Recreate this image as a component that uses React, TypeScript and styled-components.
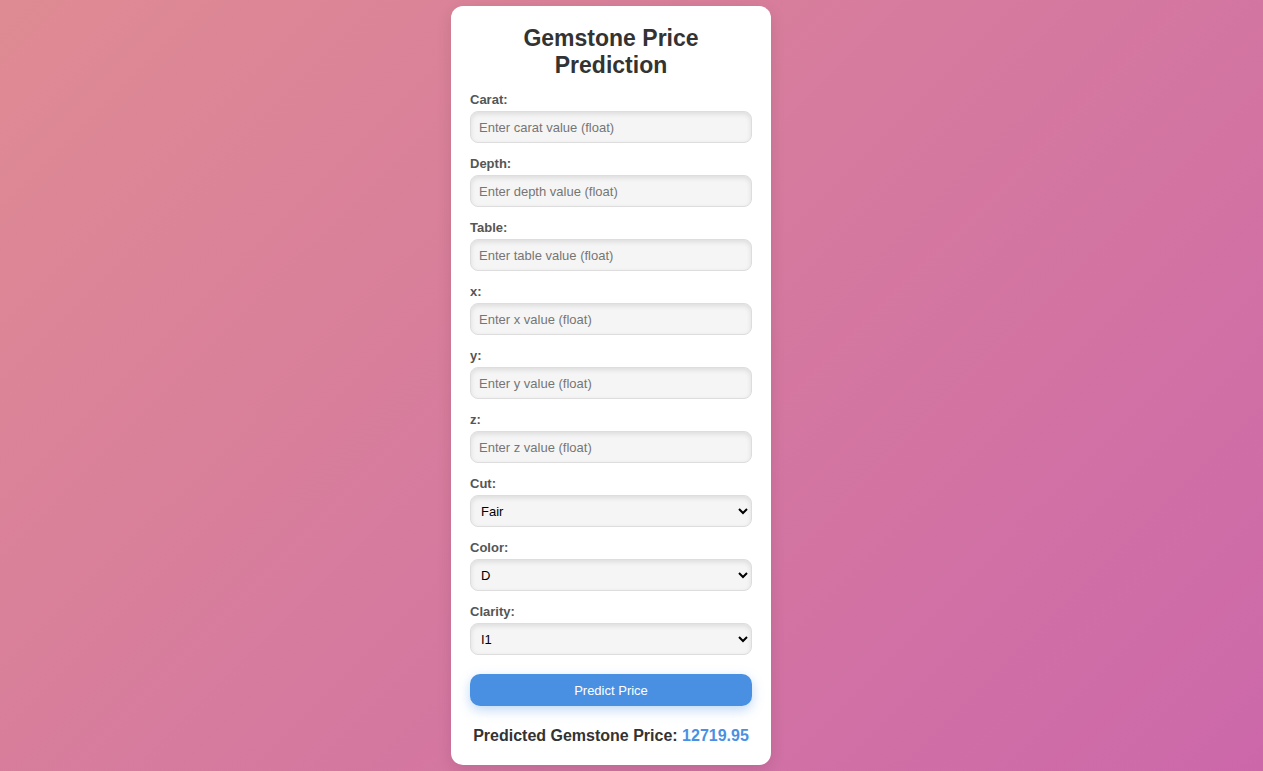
import React from "react";
import styled, { createGlobalStyle } from "styled-components";

const Global = createGlobalStyle`
  html, body { margin: 0; padding: 0; height: 100%; }
  body {
    font-family: "Liberation Sans", Arial, sans-serif;
    background: linear-gradient(135deg, #df8b93 0%, #cc68aa 100%);
    background-attachment: fixed;
    min-height: 771px;
  }
`;

const Page = styled.div`
  display: flex;
  justify-content: center;
  padding: 6px 41px 0 0;
  box-sizing: border-box;
  min-height: 771px;
`;

const Card = styled.form`
  width: 320px;
  height: 759px;
  box-sizing: border-box;
  background: #fff;
  border-radius: 12px;
  padding: 19px 19px 20px;
  box-shadow: 0 4px 15px rgba(0, 0, 0, 0.1);
  display: flex;
  flex-direction: column;
`;

const Title = styled.h1`
  margin: 0 0 13px;
  font-size: 23px;
  line-height: 27px;
  font-weight: bold;
  color: #333;
  text-align: center;
`;

const Field = styled.div`
  display: flex;
  flex-direction: column;
  margin-bottom: 13px;
`;

const Label = styled.label`
  font-size: 13px;
  font-weight: bold;
  color: #555;
  line-height: 15px;
  margin-bottom: 4px;
`;

const fieldStyle = `
  width: 100%;
  height: 32px;
  box-sizing: border-box;
  border: 1px solid #ddd;
  border-radius: 8px;
  background: #f5f5f5;
  box-shadow: inset 0 2px 5px rgba(0, 0, 0, 0.1);
  font-family: "Liberation Sans", Arial, sans-serif;
  font-size: 13px;
  color: #000;
  outline: none;
`;

const Input = styled.input`
  ${fieldStyle}
  padding: 0 8px;
  &::placeholder { color: #757575; }
`;

const Select = styled.select`
  ${fieldStyle}
  padding: 0 6px;
`;

const Button = styled.button`
  margin-top: 6px;
  height: 34px;
  border: none;
  border-radius: 10px;
  background: #4a90e2;
  color: #fff;
  font-family: "Liberation Sans", Arial, sans-serif;
  font-size: 13px;
  box-shadow: 0 4px 12px rgba(74, 144, 226, 0.35);
  cursor: pointer;
`;

const Result = styled.p`
  margin: 21px 0 0;
  text-align: center;
  font-size: 16px;
  font-weight: bold;
  color: #333;
`;

const Value = styled.span`
  color: #4a90e2;
`;

const numeric = [
  { id: "carat", label: "Carat:", ph: "Enter carat value (float)" },
  { id: "depth", label: "Depth:", ph: "Enter depth value (float)" },
  { id: "table", label: "Table:", ph: "Enter table value (float)" },
  { id: "x", label: "x:", ph: "Enter x value (float)" },
  { id: "y", label: "y:", ph: "Enter y value (float)" },
  { id: "z", label: "z:", ph: "Enter z value (float)" },
];

const selects = [
  { id: "cut", label: "Cut:", options: ["Fair", "Good", "Very Good", "Premium", "Ideal"] },
  { id: "color", label: "Color:", options: ["D", "E", "F", "G", "H", "I", "J"] },
  { id: "clarity", label: "Clarity:", options: ["I1", "SI2", "SI1", "VS2", "VS1", "VVS2", "VVS1", "IF"] },
];

export default function App() {
  return (
    <>
      <Global />
      <Page>
        <Card onSubmit={(e) => e.preventDefault()}>
          <Title>Gemstone Price Prediction</Title>
          {numeric.map((f) => (
            <Field key={f.id}>
              <Label htmlFor={f.id}>{f.label}</Label>
              <Input id={f.id} placeholder={f.ph} />
            </Field>
          ))}
          {selects.map((s) => (
            <Field key={s.id}>
              <Label htmlFor={s.id}>{s.label}</Label>
              <Select id={s.id} defaultValue={s.options[0]}>
                {s.options.map((o) => (
                  <option key={o}>{o}</option>
                ))}
              </Select>
            </Field>
          ))}
          <Button type="submit">Predict Price</Button>
          <Result>
            Predicted Gemstone Price: <Value>12719.95</Value>
          </Result>
        </Card>
      </Page>
    </>
  );
}
